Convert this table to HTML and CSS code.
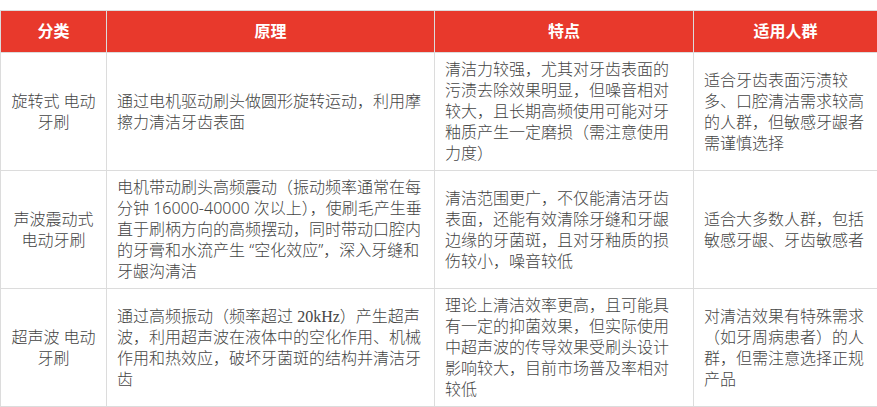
FILE: index.html
```html
<!DOCTYPE html>
<html lang="zh">
<head>
<meta charset="utf-8">
<link rel="stylesheet" href="styles.css">
</head>
<body>
<table class="cmp">
  <colgroup>
    <col class="c1"><col class="c2"><col class="c3"><col class="c4">
  </colgroup>
  <thead>
    <tr><th>分类</th><th>原理</th><th>特点</th><th>适用人群</th></tr>
  </thead>
  <tbody>
    <tr>
      <td class="kind">旋转式 电动牙刷</td>
      <td>通过电机驱动刷头做圆形旋转运动，利用摩擦力清洁牙齿表面</td>
      <td>清洁力较强，尤其对牙齿表面的污渍去除效果明显，但噪音相对较大，且长期高频使用可能对牙釉质产生一定磨损（需注意使用力度）</td>
      <td>适合牙齿表面污渍较多、口腔清洁需求较高的人群，但敏感牙龈者需谨慎选择</td>
    </tr>
    <tr>
      <td class="kind">声波震动式电动牙刷</td>
      <td>电机带动刷头高频震动（振动频率通常在每分钟 16000-40000 次以上），使刷毛产生垂直于刷柄方向的高频摆动，同时带动口腔内的牙膏和水流产生 “空化效应”，深入牙缝和牙龈沟清洁</td>
      <td>清洁范围更广，不仅能清洁牙齿表面，还能有效清除牙缝和牙龈边缘的牙菌斑，且对牙釉质的损伤较小，噪音较低</td>
      <td>适合大多数人群，包括敏感牙龈、牙齿敏感者</td>
    </tr>
    <tr>
      <td class="kind">超声波 电动牙刷</td>
      <td>通过高频振动（频率超过 <span class="serif">20kHz</span>）产生超声波，利用超声波在液体中的空化作用、机械作用和热效应，破坏牙菌斑的结构并清洁牙齿</td>
      <td>理论上清洁效率更高，且可能具有一定的抑菌效果，但实际使用中超声波的传导效果受刷头设计影响较大，目前市场普及率相对较低</td>
      <td>对清洁效果有特殊需求（如牙周病患者）的人群，但需注意选择正规产品</td>
    </tr>
  </tbody>
</table>
</body>
</html>
```

FILE: styles.css
```css
html, body {
  margin: 0;
  padding: 0;
  background: #fff;
}
body {
  padding-top: 10px;
  font-family: "Noto Sans", "Noto Sans CJK SC", sans-serif;
  font-size: 16px;
  color: #444;
}
.cmp {
  border-collapse: collapse;
  table-layout: fixed;
  width: 877px;
}
.c1 { width: 106px; }
.c2 { width: 328px; }
.c3 { width: 259px; }
.c4 { width: 184px; }
.cmp th, .cmp td {
  border: 1px solid #dcdcdc;
}
.cmp th {
  background: #e8392c;
  color: #fff;
  font-weight: bold;
  line-height: 21px;
  padding: 10px 10px;
  text-align: center;
}
.cmp td {
  font-weight: 300;
  line-height: 21px;
  padding: 6px 10px;
  vertical-align: middle;
  text-align: left;
}
.cmp td.kind {
  text-align: center;
}
.serif {
  font-family: "Liberation Serif", serif;
}
```
